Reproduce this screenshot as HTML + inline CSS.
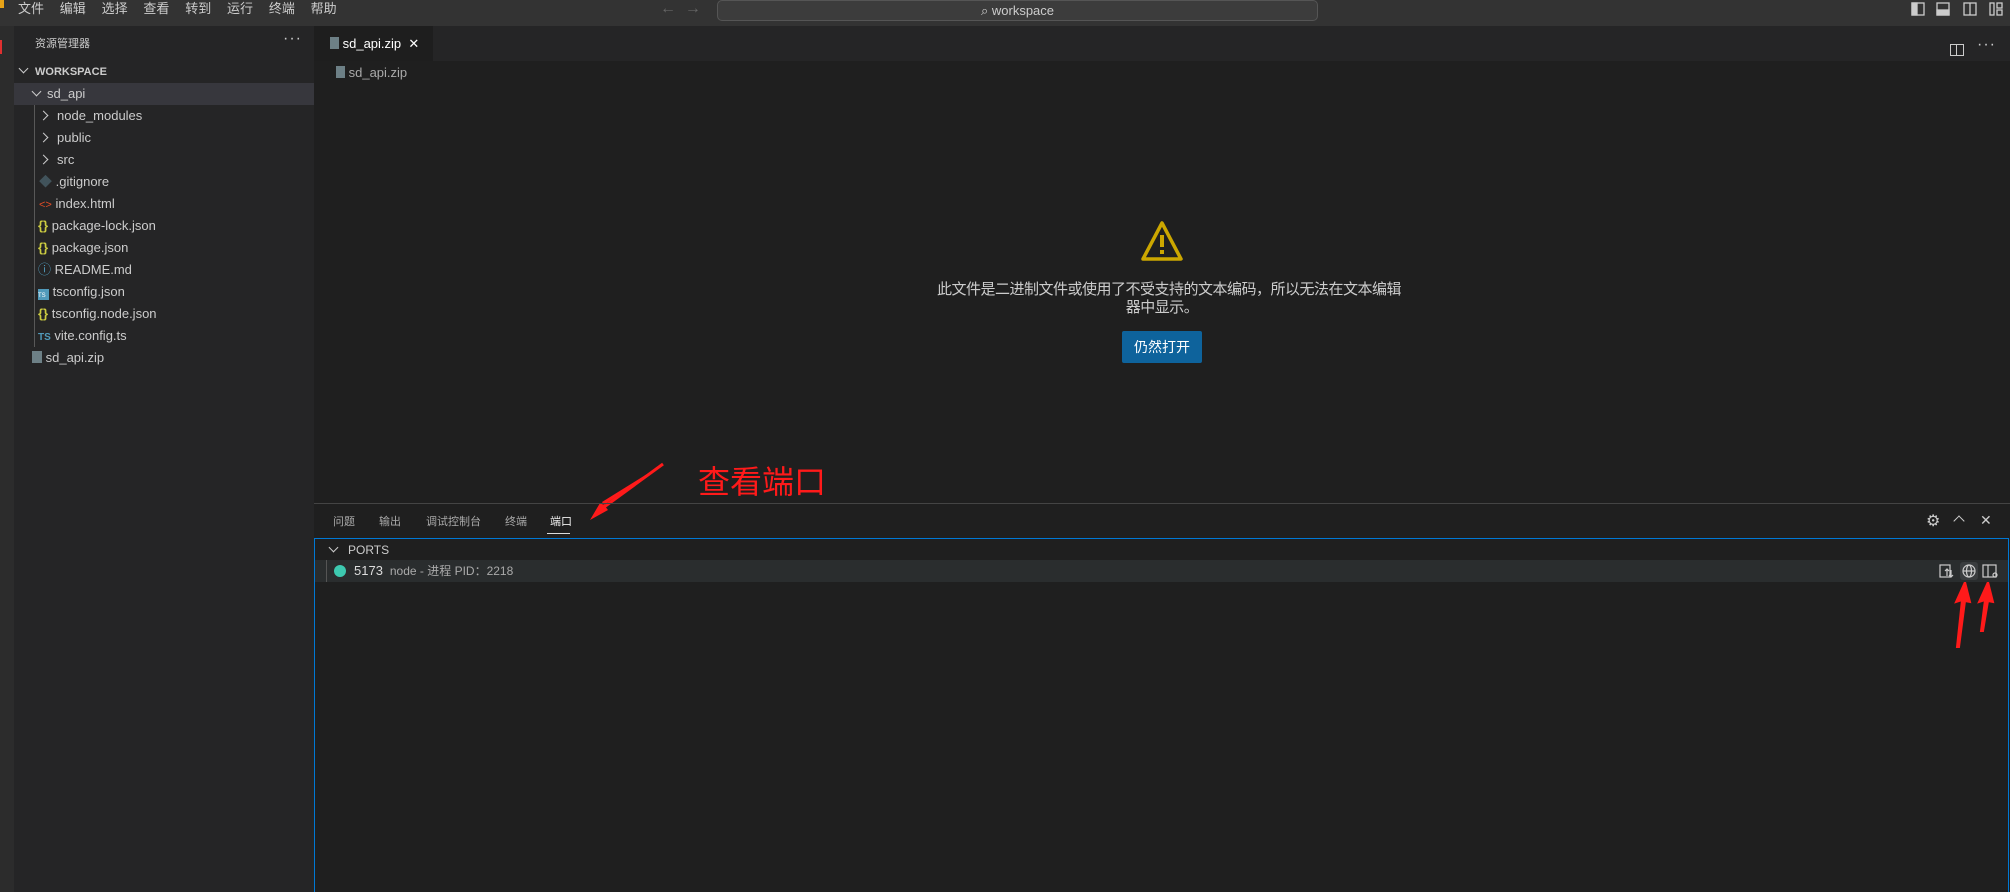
<!DOCTYPE html>
<html><head><meta charset="utf-8"><style>
*{margin:0;padding:0;box-sizing:border-box}
body{width:2010px;height:892px;background:#1f1f1f;font-family:"Liberation Sans","Noto Sans CJK SC",sans-serif;color:#ccc;position:relative;overflow:hidden;font-size:13px}
.a{position:absolute;white-space:nowrap}
.row{position:absolute;left:14px;width:300px;height:22px;line-height:22px}
.chev{display:inline-block;width:7px;height:7px;border-right:1.3px solid #ccc;border-bottom:1.3px solid #ccc;transform:rotate(45deg);vertical-align:3px}
.chr{display:inline-block;width:7px;height:7px;border-right:1.3px solid #ccc;border-bottom:1.3px solid #ccc;transform:rotate(-45deg);vertical-align:1px}
</style></head><body>
<div class="a" style="left:0;top:0;width:2010px;height:26px;background:#333"></div>
<div class="a" style="left:0;top:0;width:4px;height:8px;background:#e8a317"></div>
<div class="a" style="left:18px;top:0;line-height:17px;font-size:13px;color:#ccc;word-spacing:12.2px">文件 编辑 选择 查看 转到 运行 终端 帮助</div>
<div class="a" style="left:660px;top:0;line-height:17px;font-size:16px;color:#666">←&nbsp;&nbsp;→</div>
<div class="a" style="left:717px;top:0;width:601px;height:21px;background:#3c3c3c;border:1px solid #555;border-radius:5px;text-align:center;line-height:19px;font-size:13px;color:#ccc">⌕ workspace</div>
<svg class="a" style="left:1910px;top:1px" width="100" height="18" fill="none" stroke="#ccc" stroke-width="1.3">
<rect x="2" y="2" width="12" height="12"/><rect x="2" y="2" width="5" height="12" fill="#ccc"/>
<rect x="27" y="2" width="12" height="12"/><rect x="27" y="9" width="12" height="5" fill="#ccc"/>
<rect x="54" y="2" width="12" height="12"/><line x1="60" y1="2" x2="60" y2="14"/>
<rect x="80" y="2" width="4" height="12"/><rect x="87" y="2" width="5" height="5"/><rect x="87" y="9" width="5" height="5"/>
</svg>
<div class="a" style="left:0;top:26px;width:14px;height:866px;background:#2c2c2c"></div>
<div class="a" style="left:0;top:40px;width:2px;height:14px;background:#e03030"></div>
<div class="a" style="left:14px;top:26px;width:300px;height:866px;background:#252526"></div>
<div class="a" style="left:35px;top:35px;font-size:11px;line-height:18px">资源管理器</div>
<div class="a" style="left:283px;top:30px;font-size:16px;letter-spacing:1px">···</div>
<div class="a" style="left:20px;top:63px;line-height:18px;font-size:11px;font-weight:bold"><span class="chev" style="margin-right:8px"></span>WORKSPACE</div>
<div class="row" style="top:83px;background:#37373d"></div>
<div class="a" style="left:34px;top:105px;width:1px;height:242px;background:#585858"></div>
<div class="a" style="left:33px;top:83px;line-height:22px;font-size:13px"><span class="chev" style="margin-right:7px"></span>sd_api</div>
<div class="a" style="left:40px;top:105px;line-height:22px;font-size:13px"><span class="chr" style="margin-right:10px"></span>node_modules</div>
<div class="a" style="left:40px;top:127px;line-height:22px;font-size:13px"><span class="chr" style="margin-right:10px"></span>public</div>
<div class="a" style="left:40px;top:149px;line-height:22px;font-size:13px"><span class="chr" style="margin-right:10px"></span>src</div>
<div class="a" style="left:39px;top:171px;line-height:22px;font-size:13px"><span style="color:#41535b">◆</span> .gitignore</div>
<div class="a" style="left:39px;top:193px;line-height:22px;font-size:13px"><span style="color:#e44d26;font-size:11px">&lt;&gt;</span> index.html</div>
<div class="a" style="left:38px;top:215px;line-height:22px;font-size:13px"><span style="color:#cbcb41;font-weight:bold">{}</span> package-lock.json</div>
<div class="a" style="left:38px;top:237px;line-height:22px;font-size:13px"><span style="color:#cbcb41;font-weight:bold">{}</span> package.json</div>
<div class="a" style="left:38px;top:259px;line-height:22px;font-size:13px"><span style="color:#519aba">ⓘ</span> README.md</div>
<div class="a" style="left:38px;top:281px;line-height:22px;font-size:13px"><span style="display:inline-block;width:11px;height:11px;background:#519aba;color:#fff;font-size:6px;line-height:14px;vertical-align:-1px">TS</span> tsconfig.json</div>
<div class="a" style="left:38px;top:303px;line-height:22px;font-size:13px"><span style="color:#cbcb41;font-weight:bold">{}</span> tsconfig.node.json</div>
<div class="a" style="left:38px;top:325px;line-height:22px;font-size:13px"><span style="color:#519aba;font-size:10px;font-weight:bold">TS</span> vite.config.ts</div>
<div class="a" style="left:32px;top:347px;line-height:22px;font-size:13px"><span style="display:inline-block;width:10px;height:12px;background:#6d8086;vertical-align:-1px"></span> sd_api.zip</div>
<div class="a" style="left:314px;top:26px;width:1696px;height:35px;background:#252526"></div>
<div class="a" style="left:314px;top:26px;width:119px;height:35px;background:#1e1e1e;line-height:35px;font-size:13px;color:#fff;padding-left:16px"><span style="display:inline-block;width:9px;height:12px;background:#6d8086;vertical-align:-1px"></span> sd_api.zip &nbsp;✕</div>
<div class="a" style="left:1950px;top:44px;width:14px;height:12px;border:1.3px solid #ccc"></div><div class="a" style="left:1956px;top:44px;width:1px;height:12px;background:#ccc"></div>
<div class="a" style="left:1977px;top:36px;font-size:16px;letter-spacing:1px">···</div>
<div class="a" style="left:336px;top:63px;line-height:20px;font-size:13px;color:#aaa"><span style="display:inline-block;width:9px;height:12px;background:#6d8086;vertical-align:-1px"></span> sd_api.zip</div>
<svg class="a" style="left:1140px;top:220px" width="44" height="42"><path d="M22 3 L41 39 L3 39 Z" fill="none" stroke="#cca700" stroke-width="3.5" stroke-linejoin="round"/><rect x="20" y="15" width="4" height="12" fill="#cca700"/><rect x="20" y="30" width="4" height="4" fill="#cca700"/></svg>
<div class="a" style="left:937px;top:281px;width:450px;font-size:15px;line-height:18px;color:#ccc;text-align:center;letter-spacing:-0.5px">此文件是二进制文件或使用了不受支持的文本编码，所以无法在文本编辑<br>器中显示。</div>
<div class="a" style="left:1122px;top:331px;width:80px;height:32px;background:#0e639c;border-radius:2px;color:#fff;font-size:14px;line-height:32px;text-align:center">仍然打开</div>
<div class="a" style="left:698px;top:462px;font-size:32px;color:#ff1a1a;line-height:40px">查看端口</div>
<svg class="a" style="left:0;top:0" width="2010" height="892"><path d="M663 464 L604 505 L608 510 L590 520 L600 503 L604 505 L602 502 Z" fill="#ff1a1a"/><line x1="663" y1="464" x2="600" y2="510" stroke="#ff1a1a" stroke-width="3"/>
<path d="M1957 647 L1962 600 L1956 602 L1965 582 L1970 602 L1965 601 L1959 647 Z" fill="#ff1a1a" stroke="#ff1a1a" stroke-width="2"/>
<path d="M1981 631 L1985 600 L1979 602 L1988 582 L1993 602 L1988 601 L1983 631 Z" fill="#ff1a1a" stroke="#ff1a1a" stroke-width="2"/></svg>
<div class="a" style="left:314px;top:503px;width:1696px;height:1px;background:#444"></div>
<div class="a" style="left:333px;top:513px;font-size:11px;line-height:18px;color:#aaa">问题</div>
<div class="a" style="left:379px;top:513px;font-size:11px;line-height:18px;color:#aaa">输出</div>
<div class="a" style="left:426px;top:513px;font-size:11px;line-height:18px;color:#aaa">调试控制台</div>
<div class="a" style="left:505px;top:513px;font-size:11px;line-height:18px;color:#aaa">终端</div>
<div class="a" style="left:550px;top:513px;font-size:11px;line-height:18px;color:#eee">端口</div>
<div class="a" style="left:547px;top:533px;width:23px;height:1px;background:#ddd"></div>
<div class="a" style="left:1926px;top:511px;font-size:16px;color:#ccc">⚙</div>
<div class="a" style="left:1955px;top:517px;width:8px;height:8px;border-left:1.3px solid #ccc;border-top:1.3px solid #ccc;transform:rotate(45deg)"></div>
<div class="a" style="left:1980px;top:512px;font-size:14px;color:#ccc">✕</div>
<div class="a" style="left:314px;top:538px;width:1695px;height:354px;border:1px solid #0078d4;border-bottom:none"></div>
<div class="a" style="left:330px;top:541px;font-size:12px;line-height:18px;color:#ccc"><span class="chev" style="margin-right:11px"></span>PORTS</div>
<div class="a" style="left:315px;top:560px;width:1693px;height:22px;background:#2a2d2e"></div>
<div class="a" style="left:326px;top:560px;width:1px;height:22px;background:#555"></div>
<div class="a" style="left:334px;top:565px;width:12px;height:12px;border-radius:50%;background:#3dc9b0"></div>
<div class="a" style="left:354px;top:560px;line-height:22px;font-size:13px;color:#ddd">5173 <span style="font-size:12px;color:#aaa">&nbsp;node - 进程 PID：2218</span></div>
<svg class="a" style="left:1938px;top:562px" width="66" height="18" fill="none" stroke="#ccc" stroke-width="1.2"><rect x="2" y="3" width="10" height="12"/><path d="M9 14V7M7 9l2-2 2 2M13 8v7M11 13l2 2 2-2"/><rect x="22" y="0" width="18" height="18" rx="3" fill="#3a3d3f" stroke="none"/><circle cx="31" cy="9" r="6"/><ellipse cx="31" cy="9" rx="2.5" ry="6"/><line x1="25" y1="9" x2="37" y2="9"/><rect x="45" y="3" width="13" height="12"/><line x1="50" y1="3" x2="50" y2="15"/><circle cx="57" cy="13" r="2"/></svg>
</body></html>
